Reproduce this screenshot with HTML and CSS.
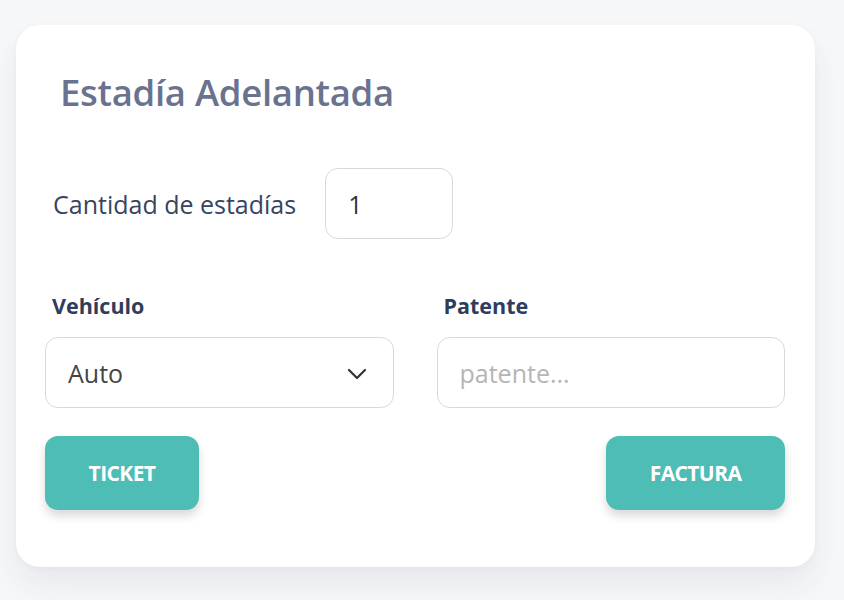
FILE: index.html
```html
<!DOCTYPE html>
<html lang="es">
<head>
<meta charset="utf-8">
<link rel="stylesheet" href="styles.css">
</head>
<body>
<div class="page">
  <div class="card">
    <h1 class="title">Estadía Adelantada</h1>
    <div class="qty-row">
      <span class="qty-label">Cantidad de estadías</span>
      <div class="qty-input">1</div>
    </div>
    <div class="fields">
      <div class="field">
        <div class="field-label">Vehículo</div>
        <div class="box select">
          <span class="value">Auto</span>
          <svg class="chev" width="20" height="12" viewBox="0 0 20 12"><path d="M2 2 L10 10 L18 2" fill="none" stroke="#333" stroke-width="2.2" stroke-linecap="round" stroke-linejoin="round"/></svg>
        </div>
      </div>
      <div class="field">
        <div class="field-label">Patente</div>
        <div class="box"><span class="placeholder">patente...</span></div>
      </div>
    </div>
    <div class="actions">
      <button class="btn btn-ticket">TICKET</button>
      <button class="btn btn-factura">FACTURA</button>
    </div>
  </div>
</div>
</body>
</html>
```
FILE: styles.css
```css
* { box-sizing: border-box; }
html, body { margin: 0; padding: 0; }
body {
  background: #f6f7f9;
  font-family: "Open Sans", "Noto Sans", sans-serif;
  width: 844px;
  height: 600px;
  overflow: hidden;
}
.page {
  padding: 25px 29px 0 16px;
}
.card {
  width: 799px;
  height: 542px;
  background: #ffffff;
  border-radius: 24px;
  box-shadow: 0 18px 30px rgba(40, 50, 70, 0.07), 0 2px 6px rgba(40,50,70,0.03);
  padding: 0 30px 0 29px;
  display: flex;
  flex-direction: column;
}
.title {
  margin: 42px 0 0 15px;
  font-size: 36.5px;
  font-weight: 600;
  color: #69738f;
  line-height: 50px;
  letter-spacing: -0.3px;
}
.qty-row {
  display: flex;
  align-items: center;
  margin-top: 51px;
  padding-left: 8px;
}
.qty-label {
  font-size: 25px;
  color: #39445e;
  margin-right: 29px;
}
.qty-input {
  width: 128px;
  height: 71px;
  border: 1px solid #d9d9d9;
  border-radius: 13px;
  font-size: 25px;
  color: #333;
  display: flex;
  align-items: center;
  padding-left: 22px;
}
.fields {
  display: flex;
  gap: 43px;
  margin-top: 52px;
}
.field { flex: 1; }
.field-label {
  font-size: 21.5px;
  font-weight: 700;
  color: #2f3d5c;
  padding-left: 7px;
  line-height: 30px;
  margin-bottom: 16px;
}
.box {
  height: 71px;
  border: 1px solid #d9d9d9;
  border-radius: 13px;
  display: flex;
  align-items: center;
  padding: 0 26px 0 22px;
  font-size: 25px;
}
.select { justify-content: space-between; }
.value { color: #444; }
.placeholder { color: #b5b5b5; font-weight: 400; }
.chev { margin-top: 2px; }
.actions {
  display: flex;
  justify-content: space-between;
  margin-top: 28px;
}
.btn {
  border: none;
  background: #4dbdb5;
  color: #fff;
  font-family: "Open Sans", sans-serif;
  font-weight: 700;
  font-size: 21px;
  letter-spacing: -0.6px;
  height: 74px;
  border-radius: 13px;
  box-shadow: 0 6px 10px rgba(0,0,0,0.15);
}
.btn-ticket { width: 154px; }
.btn-factura { width: 179px; }
```
